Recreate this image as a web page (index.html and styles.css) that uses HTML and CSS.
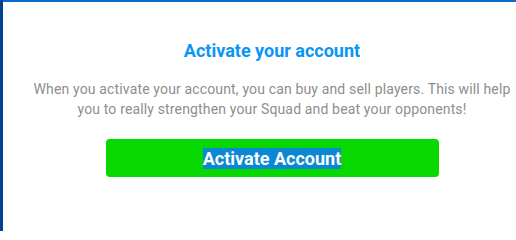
FILE: index.html
```html
<!DOCTYPE html>
<html>
<head>
<meta charset="utf-8">
<link rel="stylesheet" href="styles.css">
</head>
<body>
<div class="frame">
  <div class="side-bar"></div>
  <div class="main">
    <div class="content">
      <h2 class="title">Activate your account</h2>
      <p class="text">When you activate your account, you can buy and sell players. This will help you to really strengthen your Squad and beat your opponents!</p>
      <button class="btn"><span class="sel">Activate Account</span></button>
    </div>
  </div>
</div>
</body>
</html>
```
FILE: styles.css
```css
html, body {
  margin: 0;
  padding: 0;
  background: #ffffff;
  overflow: hidden;
}
body {
  font-family: Roboto, "Liberation Sans", sans-serif;
  width: 516px;
  height: 231px;
}
.frame {
  display: flex;
  height: 231px;
}
.side-bar {
  width: 3px;
  background: #00428f;
  flex: none;
}
.main {
  flex: 1;
  border-top: 2px solid #0a6ad0;
  padding-left: 25px;
}
.content {
  display: flex;
  flex-direction: column;
  align-items: center;
}
.title {
  margin: 38px 0 0;
  font-size: 18px;
  font-weight: 700;
  line-height: 21px;
  color: #0a95f5;
}
.text {
  margin: 18px 0 0;
  font-size: 14px;
  line-height: 20px;
  letter-spacing: 0.15px;
  color: #8e8e8e;
  text-align: center;
}
.btn {
  margin-top: 20px;
  width: 333px;
  height: 38px;
  border: none;
  border-radius: 4px;
  background: #06d800;
  color: #ffffff;
  font-family: Roboto, "Liberation Sans", sans-serif;
  font-size: 18px;
  font-weight: 700;
  padding: 0;
  display: flex;
  align-items: center;
  justify-content: center;
}
.sel {
  background: #0a88d4;
  line-height: 21px;
}
```
